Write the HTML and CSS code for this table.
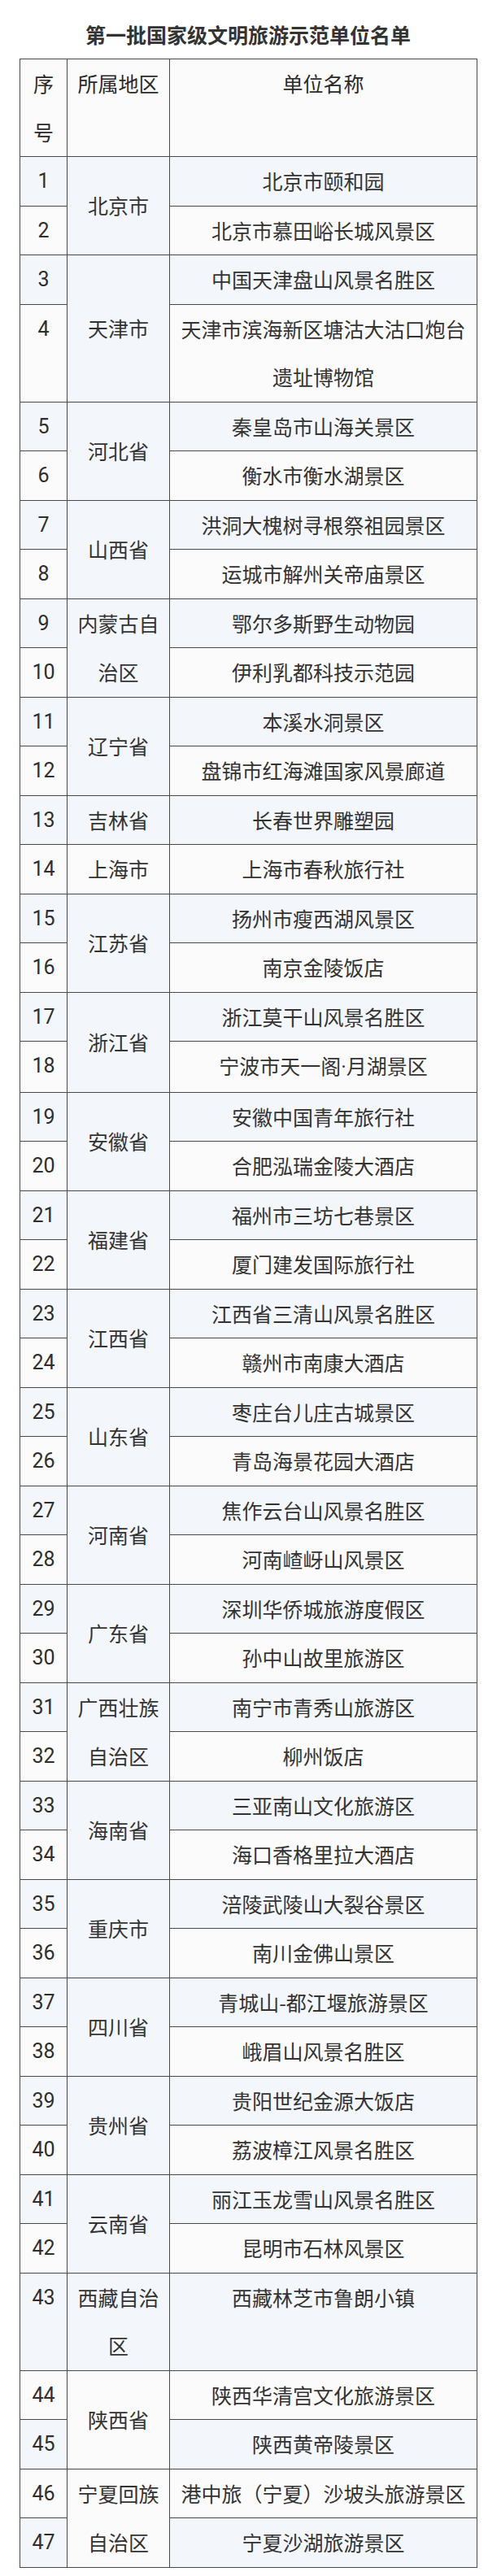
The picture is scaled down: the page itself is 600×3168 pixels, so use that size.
FILE: index.html
```html
<!DOCTYPE html>
<html lang="zh-CN">
<head>
<meta charset="utf-8">
<title>第一批国家级文明旅游示范单位名单</title>
<link rel="stylesheet" href="styles.css">
</head>
<body>
<div class="page">
  <h1 class="title">第一批国家级文明旅游示范单位名单</h1>
  <table class="list">
    <colgroup>
      <col class="c-no">
      <col class="c-region">
      <col class="c-name">
    </colgroup>
    <thead>
      <tr><th>序号</th><th>所属地区</th><th>单位名称</th></tr>
    </thead>
    <tbody>
      <tr class="odd"><td class="no">1</td><td class="region" rowspan="2">北京市</td><td>北京市颐和园</td></tr>
      <tr class="even"><td class="no">2</td><td>北京市慕田峪长城风景区</td></tr>
      <tr class="odd"><td class="no">3</td><td class="region" rowspan="2">天津市</td><td>中国天津盘山风景名胜区</td></tr>
      <tr class="even"><td class="no">4</td><td>天津市滨海新区塘沽大沽口炮台遗址博物馆</td></tr>
      <tr class="odd"><td class="no">5</td><td class="region" rowspan="2">河北省</td><td>秦皇岛市山海关景区</td></tr>
      <tr class="even"><td class="no">6</td><td>衡水市衡水湖景区</td></tr>
      <tr class="odd"><td class="no">7</td><td class="region" rowspan="2">山西省</td><td>洪洞大槐树寻根祭祖园景区</td></tr>
      <tr class="even"><td class="no">8</td><td>运城市解州关帝庙景区</td></tr>
      <tr class="odd"><td class="no">9</td><td class="region" rowspan="2">内蒙古自治区</td><td>鄂尔多斯野生动物园</td></tr>
      <tr class="even"><td class="no">10</td><td>伊利乳都科技示范园</td></tr>
      <tr class="odd"><td class="no">11</td><td class="region" rowspan="2">辽宁省</td><td>本溪水洞景区</td></tr>
      <tr class="even"><td class="no">12</td><td>盘锦市红海滩国家风景廊道</td></tr>
      <tr class="odd"><td class="no">13</td><td class="region">吉林省</td><td>长春世界雕塑园</td></tr>
      <tr class="even"><td class="no">14</td><td class="region">上海市</td><td>上海市春秋旅行社</td></tr>
      <tr class="odd"><td class="no">15</td><td class="region" rowspan="2">江苏省</td><td>扬州市瘦西湖风景区</td></tr>
      <tr class="even"><td class="no">16</td><td>南京金陵饭店</td></tr>
      <tr class="odd"><td class="no">17</td><td class="region" rowspan="2">浙江省</td><td>浙江莫干山风景名胜区</td></tr>
      <tr class="even"><td class="no">18</td><td>宁波市天一阁<span class="dot">·</span>月湖景区</td></tr>
      <tr class="odd"><td class="no">19</td><td class="region" rowspan="2">安徽省</td><td>安徽中国青年旅行社</td></tr>
      <tr class="even"><td class="no">20</td><td>合肥泓瑞金陵大酒店</td></tr>
      <tr class="odd"><td class="no">21</td><td class="region" rowspan="2">福建省</td><td>福州市三坊七巷景区</td></tr>
      <tr class="even"><td class="no">22</td><td>厦门建发国际旅行社</td></tr>
      <tr class="odd"><td class="no">23</td><td class="region" rowspan="2">江西省</td><td>江西省三清山风景名胜区</td></tr>
      <tr class="even"><td class="no">24</td><td>赣州市南康大酒店</td></tr>
      <tr class="odd"><td class="no">25</td><td class="region" rowspan="2">山东省</td><td>枣庄台儿庄古城景区</td></tr>
      <tr class="even"><td class="no">26</td><td>青岛海景花园大酒店</td></tr>
      <tr class="odd"><td class="no">27</td><td class="region" rowspan="2">河南省</td><td>焦作云台山风景名胜区</td></tr>
      <tr class="even"><td class="no">28</td><td>河南嵖岈山风景区</td></tr>
      <tr class="odd"><td class="no">29</td><td class="region" rowspan="2">广东省</td><td>深圳华侨城旅游度假区</td></tr>
      <tr class="even"><td class="no">30</td><td>孙中山故里旅游区</td></tr>
      <tr class="odd"><td class="no">31</td><td class="region" rowspan="2">广西壮族自治区</td><td>南宁市青秀山旅游区</td></tr>
      <tr class="even"><td class="no">32</td><td>柳州饭店</td></tr>
      <tr class="odd"><td class="no">33</td><td class="region" rowspan="2">海南省</td><td>三亚南山文化旅游区</td></tr>
      <tr class="even"><td class="no">34</td><td>海口香格里拉大酒店</td></tr>
      <tr class="odd"><td class="no">35</td><td class="region" rowspan="2">重庆市</td><td>涪陵武陵山大裂谷景区</td></tr>
      <tr class="even"><td class="no">36</td><td>南川金佛山景区</td></tr>
      <tr class="odd"><td class="no">37</td><td class="region" rowspan="2">四川省</td><td>青城山-都江堰旅游景区</td></tr>
      <tr class="even"><td class="no">38</td><td>峨眉山风景名胜区</td></tr>
      <tr class="odd"><td class="no">39</td><td class="region" rowspan="2">贵州省</td><td>贵阳世纪金源大饭店</td></tr>
      <tr class="even"><td class="no">40</td><td>荔波樟江风景名胜区</td></tr>
      <tr class="odd"><td class="no">41</td><td class="region" rowspan="2">云南省</td><td>丽江玉龙雪山风景名胜区</td></tr>
      <tr class="even"><td class="no">42</td><td>昆明市石林风景区</td></tr>
      <tr class="odd"><td class="no">43</td><td class="region">西藏自治区</td><td>西藏林芝市鲁朗小镇</td></tr>
      <tr class="even"><td class="no">44</td><td class="region" rowspan="2">陕西省</td><td>陕西华清宫文化旅游景区</td></tr>
      <tr class="odd"><td class="no">45</td><td>陕西黄帝陵景区</td></tr>
      <tr class="even"><td class="no">46</td><td class="region" rowspan="2">宁夏回族自治区</td><td>港中旅（宁夏）沙坡头旅游景区</td></tr>
      <tr class="odd"><td class="no">47</td><td>宁夏沙湖旅游景区</td></tr>
    </tbody>
  </table>
</div>
</body>
</html>
```

FILE: styles.css
```css
html, body {
  margin: 0;
  padding: 0;
  background: #ffffff;
}

.page {
  width: 562px;
  margin-left: 24px;
  padding-top: 24px;
  font-family: "Noto Sans CJK SC", "Noto Sans", sans-serif;
  color: #333333;
}

.title {
  margin: 0 0 12px 0;
  font-size: 25px;
  line-height: 36px;
  font-weight: 700;
  text-align: center;
  color: #333333;
}

.list {
  width: 562px;
  table-layout: fixed;
  border-collapse: collapse;
  font-size: 25px;
}

.c-no { width: 58px; }
.c-region { width: 126px; }
.c-name { width: 378px; }

.list th,
.list td {
  border: 1px solid #4a4a4a;
  padding: 0 8px;
  line-height: 59.5px;
  text-align: center;
  vertical-align: top;
  font-weight: 400;
  color: #333333;
  word-break: break-all;
}

.list th {
  background: #fbfbfb;
  color: #2a2a2a;
}

.list td.no {
  font-family: Roboto, "Noto Sans CJK SC", sans-serif;
  color: #2e2e2e;
}

.list td.region {
  vertical-align: middle;
}

.dot {
  font-family: Roboto, "Noto Sans", sans-serif;
}

.list tr.odd > td {
  background: #f3f7fc;
}

.list tr.even > td {
  background: #fbfbfb;
}
```
